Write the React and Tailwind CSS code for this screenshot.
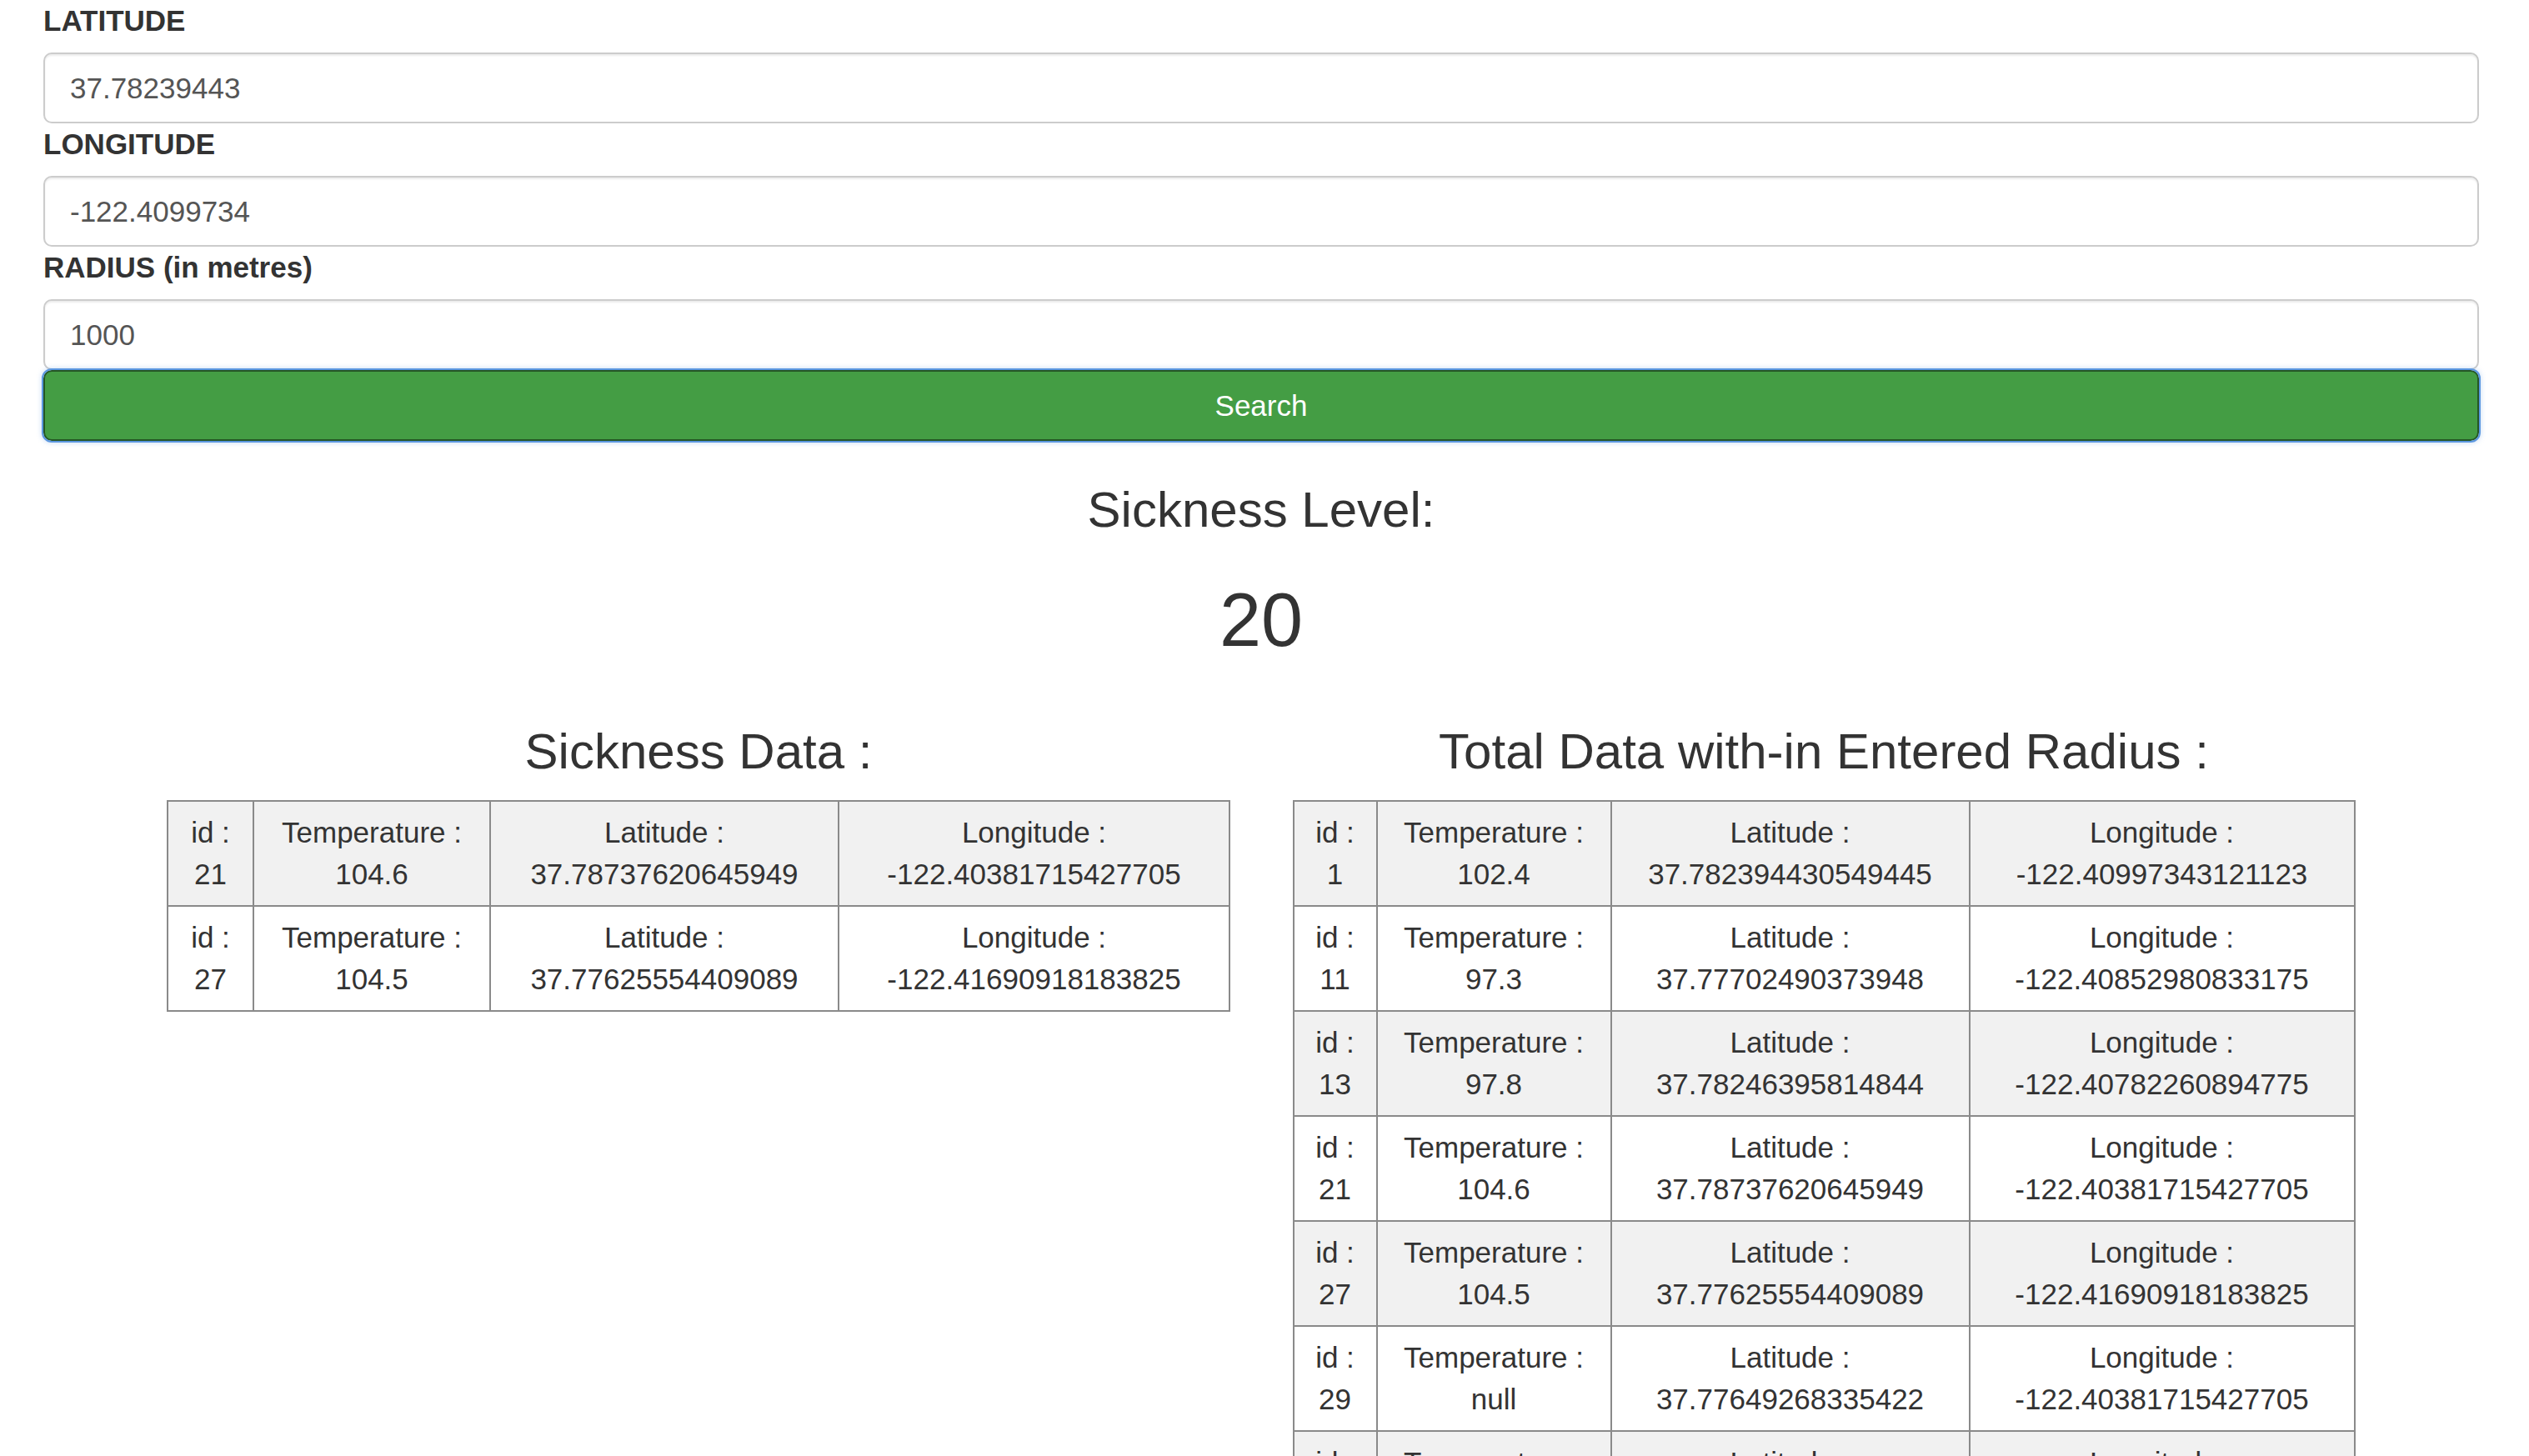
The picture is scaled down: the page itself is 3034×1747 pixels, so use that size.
import React from "react";

const leftRows = [
  ["21", "104.6", "37.78737620645949", "-122.40381715427705"],
  ["27", "104.5", "37.77625554409089", "-122.41690918183825"],
];

const rightRows = [
  ["1", "102.4", "37.782394430549445", "-122.40997343121123"],
  ["11", "97.3", "37.77702490373948", "-122.40852980833175"],
  ["13", "97.8", "37.78246395814844", "-122.40782260894775"],
  ["21", "104.6", "37.78737620645949", "-122.40381715427705"],
  ["27", "104.5", "37.77625554409089", "-122.41690918183825"],
  ["29", "null", "37.77649268335422", "-122.40381715427705"],
  ["31", "98.1", "37.77893115602254", "-122.41270542144775"],
  ["35", "99.2", "37.78581736548305", "-122.40512490272522"],
];

function Cell({ label, value }) {
  return (
    <td className="border-2 border-[#8a8a8a] px-0 py-3 text-center align-top">
      <div>{label}</div>
      <div>{value}</div>
    </td>
  );
}

function DataTable({ rows, widths, tableWidth }) {
  return (
    <table className={`table-fixed border-collapse ${tableWidth}`}>
      <colgroup>
        <col className={widths[0]} />
        <col className={widths[1]} />
        <col className={widths[2]} />
        <col className={widths[3]} />
      </colgroup>
      <tbody>
        {rows.map((r, i) => (
          <tr key={i} className={i % 2 === 0 ? "bg-[#f1f1f1]" : "bg-white"}>
            <Cell label="id :" value={r[0]} />
            <Cell label="Temperature :" value={r[1]} />
            <Cell label="Latitude :" value={r[2]} />
            <Cell label="Longitude :" value={r[3]} />
          </tr>
        ))}
      </tbody>
    </table>
  );
}

function Field({ label, value }) {
  return (
    <>
      <label className="block font-bold mb-[13px] text-[#333]">{label}</label>
      <input
        type="text"
        readOnly
        value={value}
        className="block w-full h-[85px] px-[30px] py-[15px] border-[2.5px] border-[#cccccc] rounded-[10px] bg-white text-[#555] shadow-[inset_0_2px_2px_rgba(0,0,0,0.075)] outline-none"
      />
    </>
  );
}

export default function App() {
  return (
    <div className="min-h-screen bg-white pl-[52px] pr-[60px] font-['Liberation_Sans',Arial,sans-serif] text-[35px] leading-[50px] text-[#333]">
      <Field label="LATITUDE" value="37.78239443" />
      <Field label="LONGITUDE" value="-122.4099734" />
      <Field label="RADIUS (in metres)" value="1000" />
      <button
        type="button"
        className="block w-full h-[85px] rounded-[10px] border-[2.5px] border-[#255625] bg-[#449d44] text-white text-center outline outline-2 outline-[#5b97e0] shadow-[0_0_6px_2px_rgba(91,151,224,0.35)]"
      >
        Search
      </button>

      <h3 className="text-center text-[60px] leading-[66px] mt-[50px] mb-[50px]">Sickness Level:</h3>
      <h1 className="text-center text-[90px] leading-[99px] mb-[25px]">20</h1>

      <div className="flex justify-center">
        <div className="w-[1350px] px-[38px] flex flex-col items-center">
          <h3 className="text-center text-[60px] leading-[66px] mt-[50px] mb-[25px]">Sickness Data :</h3>
          <DataTable
            rows={leftRows}
            tableWidth="w-[1274px]"
            widths={["w-[103px]", "w-[284px]", "w-[418px]", "w-[469px]"]}
          />
        </div>
        <div className="w-[1350px] px-[38px] flex flex-col items-center">
          <h3 className="text-center text-[60px] leading-[66px] mt-[50px] mb-[25px]">Total Data with-in Entered Radius :</h3>
          <DataTable
            rows={rightRows}
            tableWidth="w-[1273px]"
            widths={["w-[100px]", "w-[281px]", "w-[430px]", "w-[462px]"]}
          />
        </div>
      </div>
    </div>
  );
}
